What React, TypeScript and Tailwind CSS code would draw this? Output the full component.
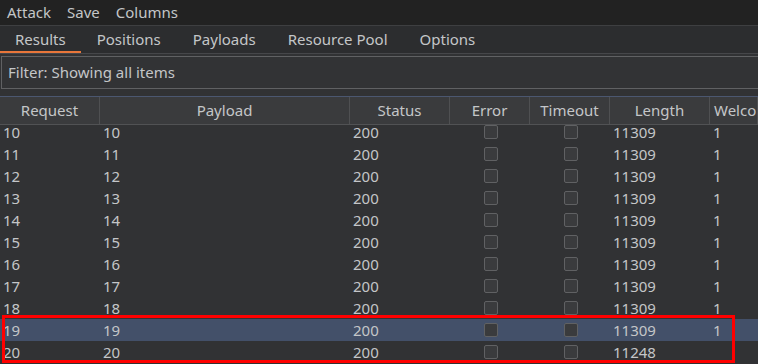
import React from 'react';

const cols = 'grid grid-cols-[100px_250px_100px_80px_80px_100px_1fr]';

const headers = ['Request', 'Payload', 'Status', 'Error', 'Timeout', 'Length', 'Welcome'];

const rows = [10, 11, 12, 13, 14, 15, 16, 17, 18, 19, 20].map((n) => ({
  request: n,
  payload: n,
  status: 200,
  length: n === 20 ? 11248 : 11309,
  welcome: n === 20 ? '' : '1',
}));

function Box() {
  return (
    <span className="block h-[14px] w-[14px] rounded-[2px] border border-[#606163] bg-[#3a3b3d]" />
  );
}

export default function App() {
  return (
    <div className="relative h-[364px] w-[758px] overflow-hidden bg-[#313234] font-['Noto_Sans',sans-serif] text-[15px] text-[#c4c6c8]">
      <div className="flex h-[26px] items-center border-b border-[#3e3f41] bg-[#222222]">
        {['Attack', 'Save', 'Columns'].map((m) => (
          <span key={m} className="px-[8px] leading-none first:pl-[7px]">
            {m}
          </span>
        ))}
      </div>

      <div className="flex h-[28px] border-b border-[#46474a] bg-[#2c2d2f]">
        {['Results', 'Positions', 'Payloads', 'Resource Pool', 'Options'].map((t, i) => (
          <div
            key={t}
            className={
              i === 0
                ? 'flex items-center border-b-[2px] border-[#e8763a] px-[15px] pt-[2px]'
                : 'flex items-center border-b-[2px] border-transparent px-[16px] pt-[2px]'
            }
          >
            {t}
          </div>
        ))}
      </div>

      <div className="pt-[2px] pl-[1px]">
        <div className="flex h-[33px] w-[800px] items-center border border-[#606163] bg-[#323335] pl-[6px]">
          Filter: Showing all items
        </div>
      </div>

      <div className="mt-[7px] border-t border-[#4b5770]">
        <div className={`${cols} h-[28px] border-b border-[#515254] bg-[#3a3b3d]`}>
          {headers.map((h) => (
            <div
              key={h}
              className="flex items-center justify-center overflow-hidden whitespace-nowrap border-r border-[#4f5052] last:justify-start last:pl-[4px]"
            >
              {h}
            </div>
          ))}
        </div>

        <div className="h-[240px] overflow-hidden">
          <div className="-mt-[4px]">
            {rows.map((r) => (
              <div
                key={r.request}
                className={`${cols} h-[22px] items-center ${r.request === 19 ? 'bg-[#435069]' : ''}`}
              >
                <span className="pl-[3px]">{r.request}</span>
                <span className="pl-[3px]">{r.payload}</span>
                <span className="pl-[3px]">{r.status}</span>
                <span className="flex justify-center pl-[1px]">
                  <Box />
                </span>
                <span className="flex justify-center pl-[1px]">
                  <Box />
                </span>
                <span className="pl-[3px]">{r.length}</span>
                <span className="pl-[3px]">{r.welcome}</span>
              </div>
            ))}
          </div>
        </div>
      </div>

      <div className="absolute left-[2px] top-[315px] h-[48px] w-[733px] border-[3px] border-[#ff0000]" />
    </div>
  );
}
